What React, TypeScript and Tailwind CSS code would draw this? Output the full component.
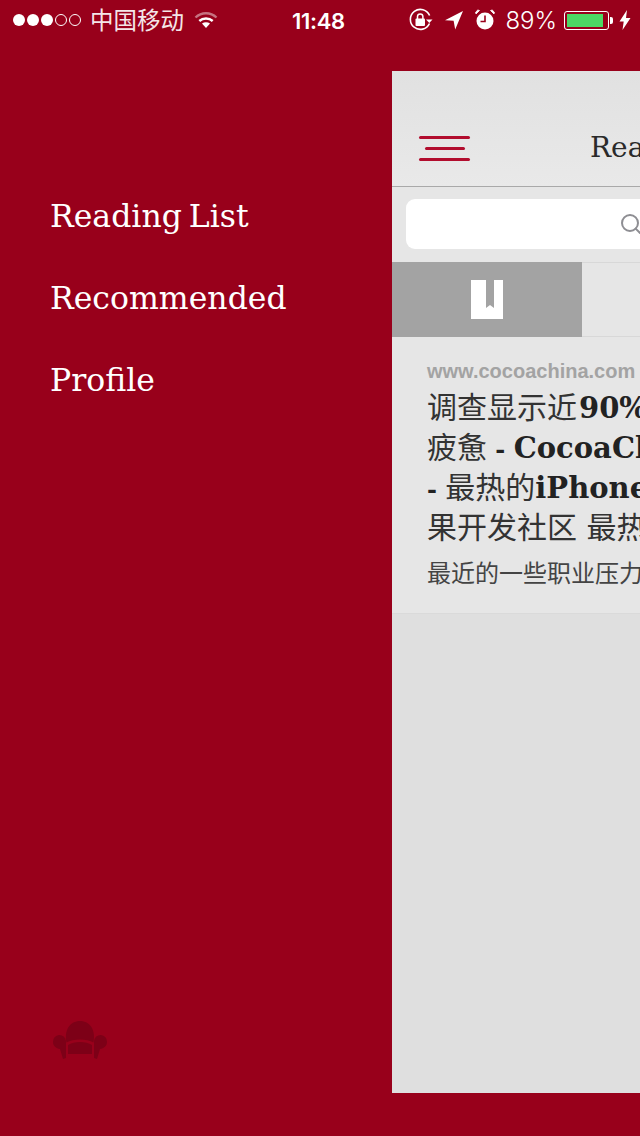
import { Search } from 'lucide-react'

const cjk = '"Noto Sans CJK SC", sans-serif'

function SignalDots() {
  return (
    <div className="flex items-center gap-[2px]">
      {[0, 1, 2].map((i) => (
        <span key={i} className="w-[12px] h-[12px] rounded-full bg-white" />
      ))}
      {[3, 4].map((i) => (
        <span key={i} className="w-[12px] h-[12px] rounded-full border border-white" />
      ))}
    </div>
  )
}

function Wifi() {
  return (
    <svg width="24" height="18" viewBox="0 0 24 18" fill="none">
      <path d="M1.5 6.5C7.5 .8 16.5 .8 22.5 6.5" stroke="#fff" strokeOpacity="0.45" strokeWidth="2.4" />
      <path d="M5.3 10C9 6.6 15 6.6 18.7 10" stroke="#fff" strokeWidth="2.4" />
      <path d="M8 12.6C10.4 10.7 13.6 10.7 16 12.6L12 17Z" fill="#fff" />
    </svg>
  )
}

function RotationLock() {
  return (
    <svg width="24" height="24" viewBox="0 0 24 24" fill="none">
      <path d="M20.5 15.5A10 10 0 1 1 20.6 7.5" stroke="#fff" strokeWidth="1.6" />
      <path d="M17 11.5h6.5l-3.2 3.4Z" fill="#fff" />
      <rect x="6.5" y="10.5" width="9.5" height="7.5" rx="1" fill="#fff" />
      <path d="M8.5 11V8.6a2.7 2.7 0 0 1 5.4 0V11" stroke="#fff" strokeWidth="1.5" />
    </svg>
  )
}

function LocationArrow() {
  return (
    <svg width="20" height="20" viewBox="0 0 20 20">
      <path d="M19 1 1 10.2l8.6.5 1.6 8.8Z" fill="#fff" />
    </svg>
  )
}

function Alarm() {
  return (
    <svg width="20" height="22" viewBox="0 0 20 22">
      <circle cx="10" cy="12" r="8.5" fill="#fff" />
      <path d="M1 5 4.5 1.5 2.8 1 .6 3.2ZM19 5 15.5 1.5 17.2 1 19.4 3.2Z" fill="#fff" stroke="#fff" strokeWidth="0.8" />
      <path d="M10 6.5V12.5H5.5" stroke="#98001b" strokeWidth="1.6" fill="none" />
    </svg>
  )
}

function Battery() {
  return (
    <div className="flex items-center">
      <div className="w-[45px] h-[19px] border border-white rounded-[3px] p-[2px]">
        <div className="w-[36px] h-full bg-[#4cd964]" />
      </div>
      <span className="w-[3px] h-[7px] bg-white rounded-r-[2px] ml-[1px]" />
    </div>
  )
}

function Bolt() {
  return (
    <svg width="12" height="20" viewBox="0 0 12 20">
      <path d="M8 0 .5 11.5h4.2L3.5 20 11.5 8H7Z" fill="#fff" />
    </svg>
  )
}

function StatusBar() {
  return (
    <div className="h-[40px] shrink-0 flex items-center pl-[13px] pr-[9px] text-white">
      <SignalDots />
      <span className="ml-[9px] text-[23.5px] leading-none opacity-90" style={{ fontFamily: cjk }}>中国移动</span>
      <span className="ml-[10px]"><Wifi /></span>
      <span className="ml-[74px] mt-[1px] text-[22px] leading-none font-semibold font-['Inter',sans-serif] w-[54px] whitespace-nowrap tracking-[-0.3px]">11:48</span>
      <div className="ml-auto flex items-center">
        <RotationLock />
        <span className="ml-[11px]"><LocationArrow /></span>
        <span className="ml-[11px]"><Alarm /></span>
        <span className="ml-[10px] mt-[1px] text-[24px] leading-none font-['Inter',sans-serif] font-light">89%</span>
        <span className="ml-[7px]"><Battery /></span>
        <span className="ml-[6px]"><Bolt /></span>
      </div>
    </div>
  )
}

function Armchair() {
  return (
    <svg width="56" height="40" viewBox="0 0 56 40" fill="#7d0017">
      <path d="M14.5 22.5C12 10 18 1 28 1S44 10 41.5 22.5C35 18.5 21 18.5 14.5 22.5Z" />
      <path d="M16 25C22 21 34 21 40 25V34H16Z" />
      <path d="M1 22a6.5 6.5 0 0 1 13-1L14 38 11 39 8 29C4 28.5 1 26 1 22Z" />
      <path d="M55 22a6.5 6.5 0 0 0-13-1L42 38 45 39 48 29C52 28.5 55 26 55 22Z" />
    </svg>
  )
}

function Sidebar() {
  const items = ['Reading List', 'Recommended', 'Profile']
  return (
    <div className="w-[392px] shrink-0 flex flex-col pl-[50px] pt-[156px] pb-[76px]">
      <nav className="flex flex-col gap-[41px]">
        {items.map((item) => (
          <a key={item} className="text-[31.5px] leading-[41px] text-white font-['DejaVu_Serif',serif] whitespace-nowrap [word-spacing:-3px]">
            {item}
          </a>
        ))}
      </nav>
      <div className="mt-auto pl-[2px]">
        <Armchair />
      </div>
    </div>
  )
}

function BookmarkIcon() {
  return (
    <svg width="32" height="39" viewBox="0 0 32 39" fill="#fff">
      <path d="M0 0H15V28L19 25 23 28V0H32V39H0Z" />
    </svg>
  )
}

function Panel() {
  return (
    <div className="flex-1 mt-[31px] mb-[43px] bg-[#dfdfdf] overflow-hidden flex flex-col">
      <div className="h-[116px] shrink-0 bg-gradient-to-b from-[#e1e1e1] to-[#e9e9e9] border-b border-[#a9a9a9] flex items-end pb-[25px] pl-[27px]">
        <div className="w-[51px] flex flex-col items-center gap-[8px]">
          <span className="w-[51px] h-[3px] rounded-full bg-[#b20d2e]" />
          <span className="w-[40px] h-[3px] rounded-full bg-[#b20d2e]" />
          <span className="w-[51px] h-[3px] rounded-full bg-[#b20d2e]" />
        </div>
        <span className="ml-[120px] mb-[-4px] text-[28px] leading-[34px] text-[#2a2a2a] font-['DejaVu_Serif',serif] whitespace-nowrap">Reading List</span>
      </div>
      <div className="h-[75px] shrink-0 bg-[#e6e6e6] px-[14px] pt-[12px]">
        <div className="h-[50px] w-[400px] bg-white rounded-[9px] flex items-center pl-[213px]">
          <Search size={24} strokeWidth={2} className="text-[#8e8e93]" />
        </div>
      </div>
      <div className="h-[75px] shrink-0 flex bg-[#e6e6e6]">
        <div className="w-[190px] bg-[#a3a3a3] flex items-center justify-center">
          <BookmarkIcon />
        </div>
        <div className="flex-1 border-y border-[#d8d8d8]" />
      </div>
      <article className="h-[277px] shrink-0 bg-[#e6e6e6] border-b border-[#dadada] pl-[35px] pt-[23px]">
        <p className="text-[20px] leading-[22px] font-bold text-[#a3a3a3] font-['Liberation_Sans',sans-serif] whitespace-nowrap">www.cocoachina.com</p>
        <h2 className="mt-[6px] w-[420px] text-[30px] leading-[40px] text-[#333] font-['DejaVu_Serif','Noto_Sans_CJK_SC',serif]">
          <span className="block h-[40px] whitespace-nowrap">调查显示近<b className="ml-[2px] text-[29px] text-[#222]">90%</b>的程序员感到</span>
          <span className="block h-[40px] whitespace-nowrap">疲惫<b className="text-[24px] text-[#222]"> - </b><b className="text-[29px] text-[#222]">CocoaChina</b></span>
          <span className="block h-[40px] whitespace-nowrap"><b className="text-[24px] text-[#222]">- </b>最热的<b className="text-[29px] text-[#222]">iPhone</b>开发社区</span>
          <span className="block h-[40px] whitespace-nowrap">果开发社区 最热的</span>
        </h2>
        <p className="mt-[8px] text-[24px] leading-[32px] text-[#444] whitespace-nowrap" style={{ fontFamily: cjk }}>最近的一些职业压力</p>
      </article>
    </div>
  )
}

export default function App() {
  return (
    <div className="w-[640px] h-[1136px] bg-[#98001b] flex flex-col overflow-hidden">
      <StatusBar />
      <div className="flex-1 flex min-h-0">
        <Sidebar />
        <Panel />
      </div>
    </div>
  )
}
